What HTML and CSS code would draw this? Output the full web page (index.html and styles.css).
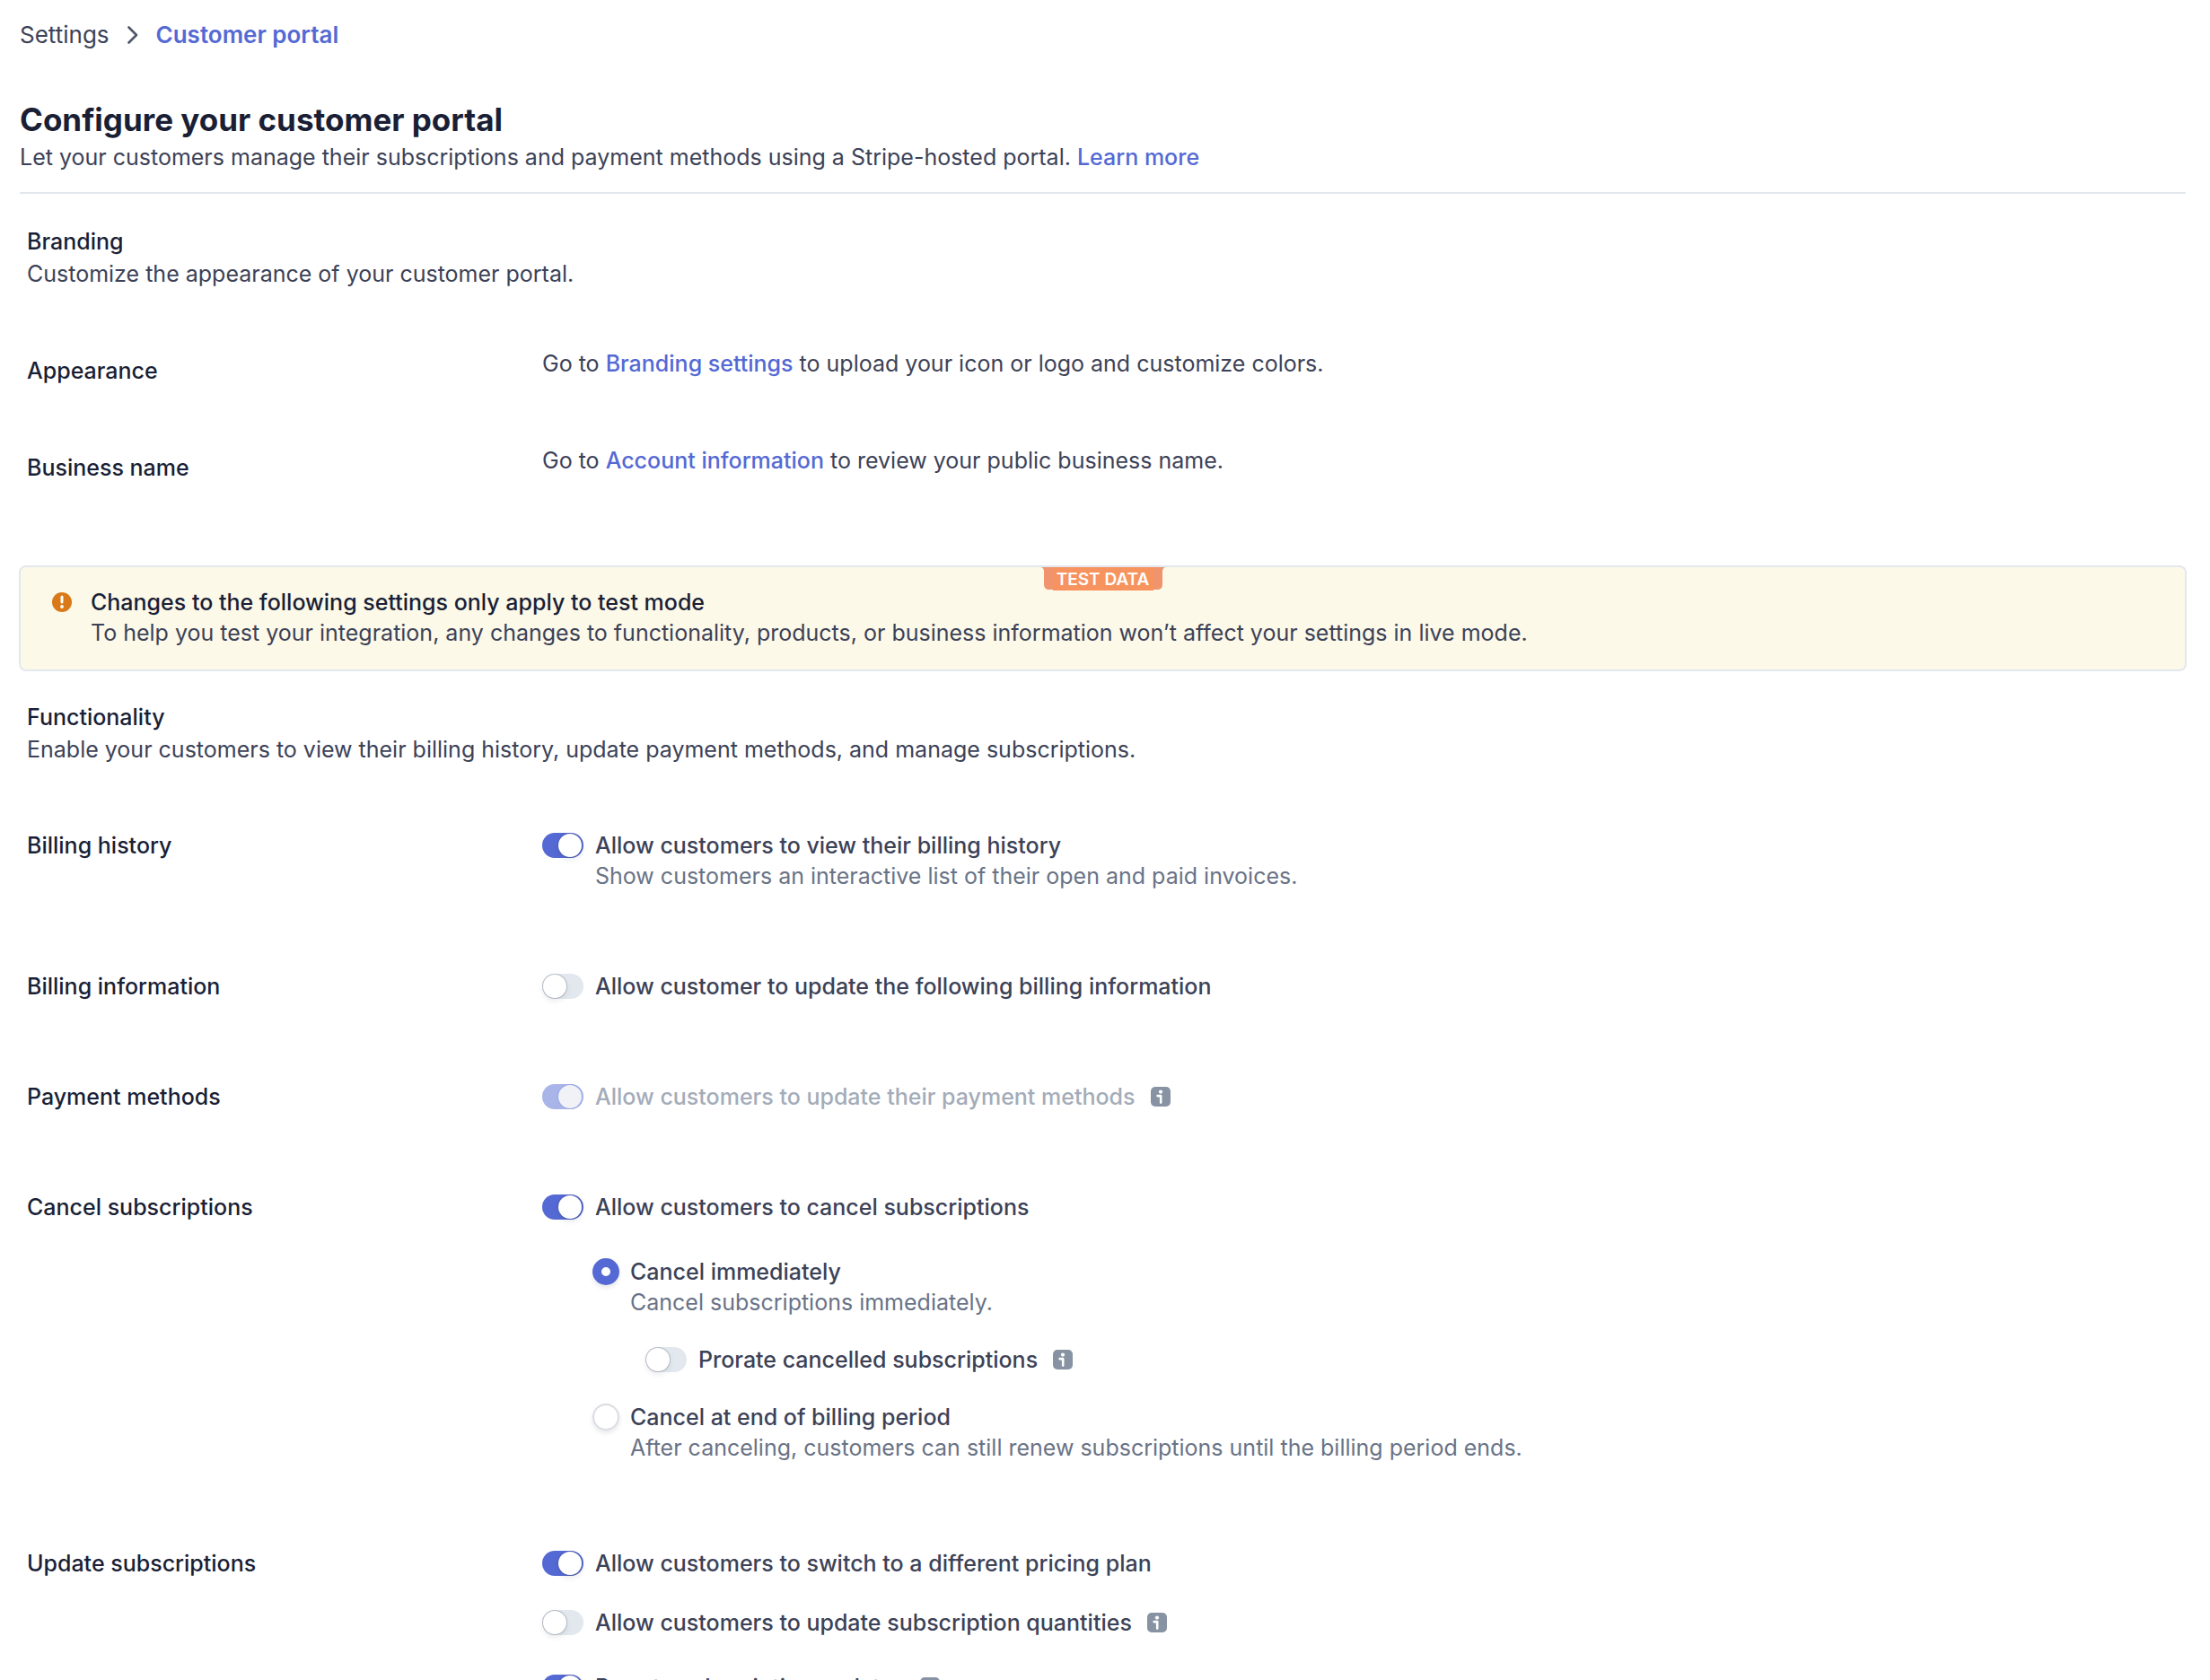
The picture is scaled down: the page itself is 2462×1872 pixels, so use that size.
FILE: index.html
```html
<!DOCTYPE html>
<html lang="en">
<head>
<meta charset="utf-8">
<meta name="viewport" content="width=device-width, initial-scale=1">
<title>Customer portal</title>
<link rel="stylesheet" href="styles.css">
</head>
<body>
<svg class="sprite" aria-hidden="true">
  <symbol id="info" viewBox="0 0 22 22">
    <rect width="22" height="22" rx="5" fill="#8792a2"/>
    <circle cx="11" cy="5.6" r="2.1" fill="#fff"/>
    <path d="M7.6 10.1H11.2V17.6" fill="none" stroke="#fff" stroke-width="2.6" stroke-linecap="round" stroke-linejoin="round"/>
  </symbol>
</svg>
<main class="page">
  <nav class="breadcrumb" aria-label="Breadcrumb">
    <a class="crumb" href="#">Settings</a>
    <svg class="chevron" viewBox="0 0 12 20" aria-hidden="true"><path d="M1.5 1.5 10 10 1.5 18.5" fill="none" stroke="#4f566b" stroke-width="2.6" stroke-linecap="round" stroke-linejoin="round"/></svg>
    <a class="crumb crumb-current" href="#" aria-current="page">Customer portal</a>
  </nav>

  <header class="page-header">
    <h1 class="page-title">Configure your customer portal</h1>
    <p class="text">Let your customers manage their subscriptions and payment methods using a Stripe-hosted portal. <a class="link" href="#">Learn more</a></p>
  </header>

  <section class="section">
    <div class="section-head">
      <h2 class="label">Branding</h2>
      <p class="text">Customize the appearance of your customer portal.</p>
    </div>
    <div class="rows rows-text">
      <div class="row">
        <h3 class="label">Appearance</h3>
        <p class="text">Go to <a class="link" href="#">Branding settings</a> to upload your icon or logo and customize colors.</p>
      </div>
      <div class="row">
        <h3 class="label">Business name</h3>
        <p class="text">Go to <a class="link" href="#">Account information</a> to review your public business name.</p>
      </div>
    </div>
  </section>

  <aside class="banner">
    <div class="badge">
      <svg class="badge-shape" viewBox="0 0 138 26" aria-hidden="true">
        <path d="M0 0H138Q135 1 135 5V19Q135 25 129 25H9Q3 25 3 19V5Q3 1 0 0Z" fill="#ef946c"/>
        <path d="M13 0H125V26H13Z" fill="#f6935f"/>
      </svg>
      <span class="badge-text">TEST DATA</span>
    </div>
    <svg class="alert" viewBox="0 0 22 22" aria-hidden="true">
      <circle cx="11" cy="11" r="11" fill="#d97917"/>
      <path d="M11 5V11" stroke="#fff" stroke-width="3" stroke-linecap="round"/>
      <circle cx="11" cy="16" r="1.9" fill="#fff"/>
    </svg>
    <div>
      <h2 class="label">Changes to the following settings only apply to test mode</h2>
      <p class="text">To help you test your integration, any changes to functionality, products, or business information won’t affect your settings in live mode.</p>
    </div>
  </aside>

  <section class="section">
    <div class="section-head">
      <h2 class="label">Functionality</h2>
      <p class="text">Enable your customers to view their billing history, update payment methods, and manage subscriptions.</p>
    </div>
    <div class="rows rows-controls">
      <div class="row">
        <h3 class="label">Billing history</h3>
        <div class="choice">
          <input class="switch" type="checkbox" role="switch" id="history" checked aria-describedby="history-note">
          <label class="choice-label" for="history">Allow customers to view their billing history</label>
          <p class="note" id="history-note">Show customers an interactive list of their open and paid invoices.</p>
        </div>
      </div>
      <div class="row">
        <h3 class="label">Billing information</h3>
        <div class="choice">
          <input class="switch" type="checkbox" role="switch" id="information">
          <label class="choice-label" for="information">Allow customer to update the following billing information</label>
        </div>
      </div>
      <div class="row">
        <h3 class="label">Payment methods</h3>
        <div class="choice">
          <input class="switch" type="checkbox" role="switch" id="methods" checked disabled>
          <label class="choice-label" for="methods">Allow customers to update their payment methods</label>
          <button class="info" type="button" aria-label="More information"><svg class="info-icon"><use href="#info"/></svg></button>
        </div>
      </div>
      <div class="row">
        <h3 class="label">Cancel subscriptions</h3>
        <div>
          <div class="choice">
            <input class="switch" type="checkbox" role="switch" id="cancel" checked>
            <label class="choice-label" for="cancel">Allow customers to cancel subscriptions</label>
          </div>
          <div class="options" role="radiogroup" aria-label="When to cancel">
            <div class="choice choice-radio">
              <input class="radio" type="radio" name="when" id="now" checked aria-describedby="now-note">
              <label class="choice-label" for="now">Cancel immediately</label>
              <p class="note" id="now-note">Cancel subscriptions immediately.</p>
            </div>
            <div class="choice choice-nested">
              <input class="switch" type="checkbox" role="switch" id="prorate">
              <label class="choice-label" for="prorate">Prorate cancelled subscriptions</label>
              <button class="info" type="button" aria-label="More information"><svg class="info-icon"><use href="#info"/></svg></button>
            </div>
            <div class="choice choice-radio">
              <input class="radio" type="radio" name="when" id="end" aria-describedby="end-note">
              <label class="choice-label" for="end">Cancel at end of billing period</label>
              <p class="note" id="end-note">After canceling, customers can still renew subscriptions until the billing period ends.</p>
            </div>
          </div>
        </div>
      </div>
      <div class="row">
        <h3 class="label">Update subscriptions</h3>
        <div class="stack">
          <div class="choice">
            <input class="switch" type="checkbox" role="switch" id="plan" checked>
            <label class="choice-label" for="plan">Allow customers to switch to a different pricing plan</label>
          </div>
          <div class="choice">
            <input class="switch" type="checkbox" role="switch" id="quantities">
            <label class="choice-label" for="quantities">Allow customers to update subscription quantities</label>
            <button class="info" type="button" aria-label="More information"><svg class="info-icon"><use href="#info"/></svg></button>
          </div>
          <div class="choice choice-last">
            <input class="switch" type="checkbox" role="switch" id="updates" checked>
            <label class="choice-label" for="updates">Prorate subscription updates</label>
            <button class="info" type="button" aria-label="More information"><svg class="info-icon"><use href="#info"/></svg></button>
          </div>
        </div>
      </div>
    </div>
  </section>
</main>
</body>
</html>
```
FILE: styles.css
```css
* { box-sizing: border-box; }

body {
  margin: 0;
  background: #fff;
  color: #3c4257;
  font-family: Inter, "Liberation Sans", sans-serif;
  font-size: 25px;
  line-height: 34px;
}

h1, h2, h3, p { margin: 0; }
a { text-decoration: none; }
.sprite { display: none; }

.page { padding: 22px 27px 0 22px; }

.breadcrumb { display: flex; align-items: center; gap: 20px; font-size: 26px; }
.crumb { color: #3c4257; }
.crumb-current { color: #5469d4; font-weight: 600; }
.chevron { width: 12px; height: 20px; }

.page-header {
  margin: 55px 0 2px;
  padding-bottom: 22px;
  border-bottom: 2px solid #e3e8ee;
}
.page-title {
  margin-bottom: 3px;
  color: #1a1f36;
  font-size: 35px;
  font-weight: 700;
  line-height: 44px;
}

.link { color: #5469d4; font-weight: 500; }
.label { color: #1a1f36; font-size: 25px; font-weight: 500; }

.section { padding: 34px 8px 0; }
.section-head { display: grid; gap: 2px; }

.rows { display: grid; }
.rows-text { margin-top: 66px; gap: 66px; }
.rows-text .label { padding-top: 8px; }
.rows-controls { margin-top: 73px; gap: 89px; }
.row { display: grid; grid-template-columns: 574px 1fr; }

.banner {
  position: relative;
  display: flex;
  gap: 21px;
  margin: 92px -1px 0;
  padding: 22px 35px 24px;
  border: 2px solid #e3e8ee;
  border-radius: 8px;
  background: #fcf9e9;
}
.alert { width: 22px; height: 22px; margin-top: 6px; }
.badge {
  position: absolute;
  top: 0;
  left: calc(50% - 69px);
  width: 138px;
  height: 26px;
}
.badge-shape { display: block; width: 138px; height: 26px; }
.badge-text {
  position: absolute;
  inset: 0;
  color: #fff;
  font-size: 19px;
  font-weight: 600;
  line-height: 27px;
  text-align: center;
}

.choice {
  display: grid;
  grid-template-columns: 46px auto 1fr;
  column-gap: 13px;
  align-items: center;
}
.choice-radio { grid-template-columns: 30px auto 1fr; column-gap: 12px; }
.choice-nested { margin-left: 59px; }
.choice-label { font-weight: 500; }
.note { grid-column: 2 / -1; color: #697386; }
.options { display: grid; gap: 30px; margin: 38px 0 6px 56px; }
.stack { display: grid; gap: 32px; }
.choice-last { margin-top: 6px; }

.switch, .radio { appearance: none; margin: 0; }
.switch {
  display: flex;
  width: 46px;
  height: 28px;
  padding: 1px;
  border-radius: 14px;
  background: #e3e8ee;
}
.switch::before {
  content: "";
  width: 26px;
  height: 26px;
  border-radius: 50%;
  background: #fff;
  box-shadow: 0 0 0 1px rgba(60, 66, 87, .24), 0 3px 6px rgba(60, 66, 87, .12);
}
.switch:checked { justify-content: flex-end; padding-right: 2px; background: #5469d4; }
.switch:disabled { background: #a9b4e9; }
.switch:disabled::before { background: #f0f2f7; box-shadow: 0 0 0 1px #98a5e5; }
.switch:disabled + .choice-label { color: #a3acb9; }

.radio {
  width: 30px;
  height: 30px;
  border: 2px solid #dadce2;
  border-radius: 50%;
  box-shadow: 0 3px 5px rgba(60, 66, 87, .12);
}
.radio:checked { border: 10px solid #5469d4; }

.info { display: flex; width: 22px; height: 22px; margin-left: 4px; padding: 0; border: 0; background: none; }
.info-icon { width: 22px; height: 22px; }
```
